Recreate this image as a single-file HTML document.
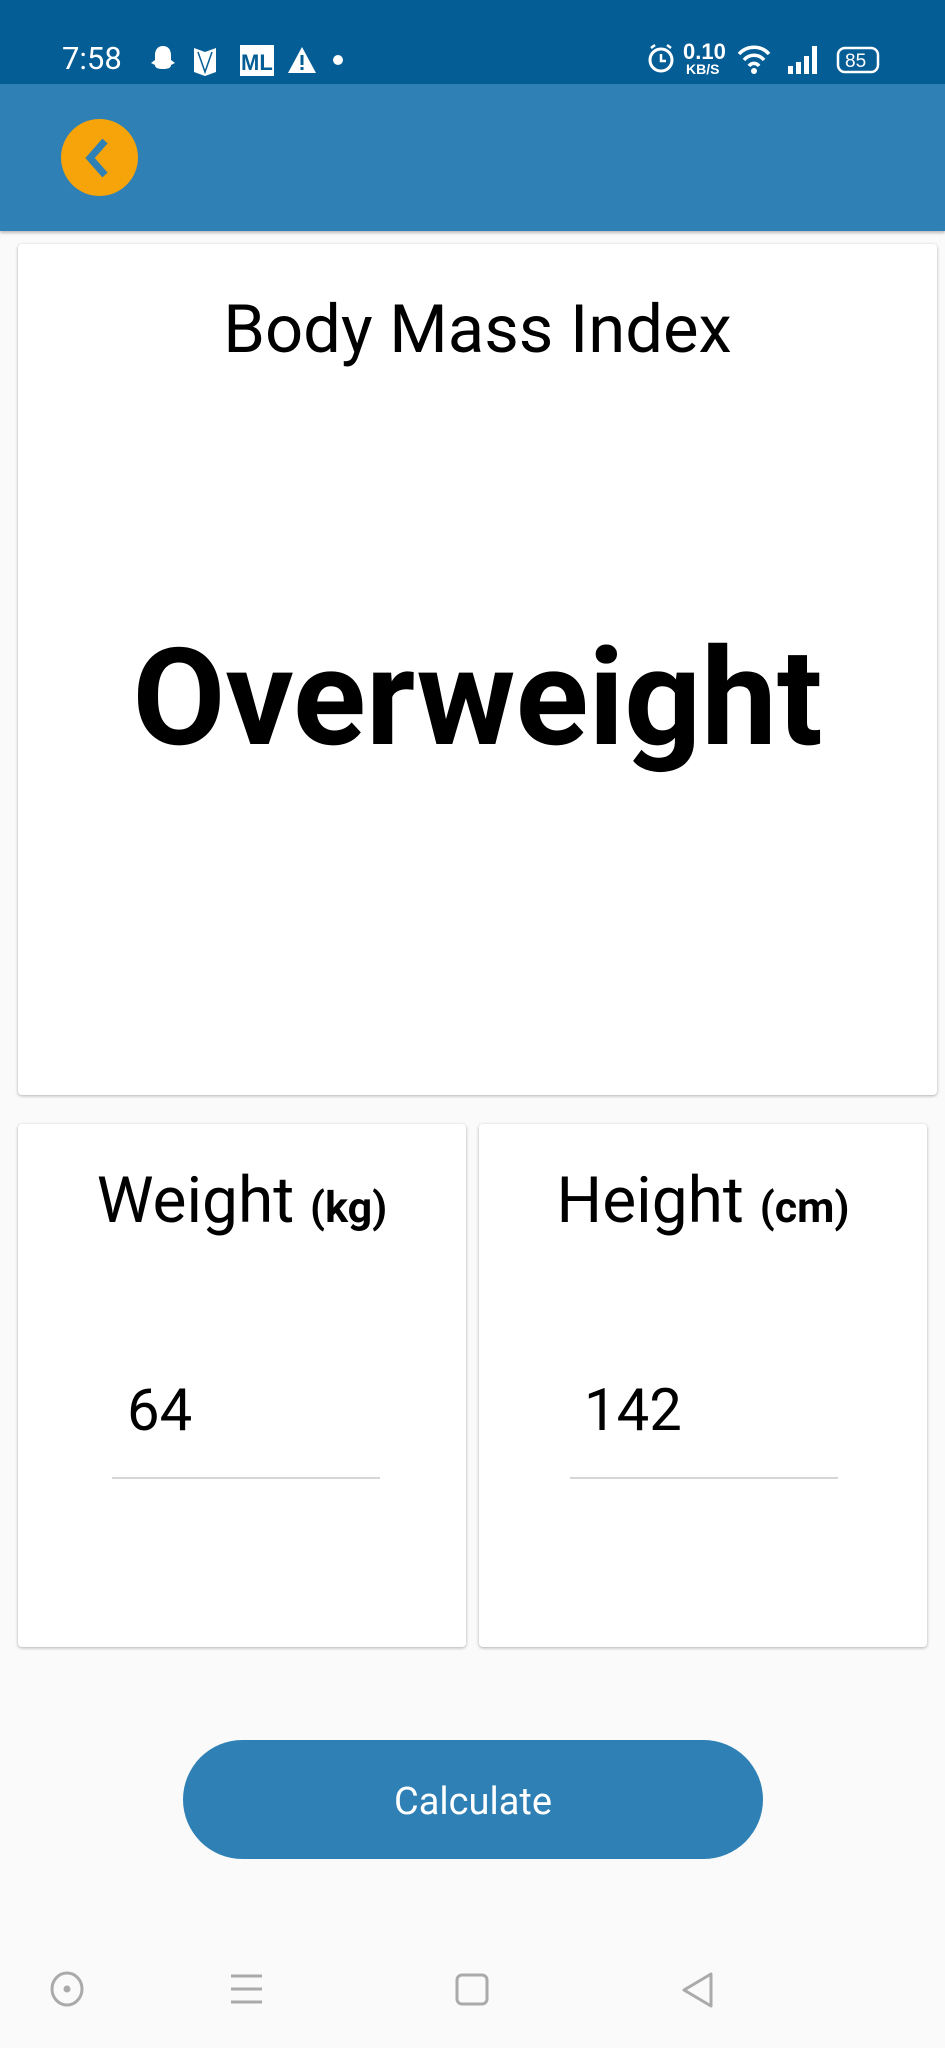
<!DOCTYPE html>
<html><head><meta charset="utf-8"><style>
*{margin:0;padding:0;box-sizing:border-box}
body{width:945px;height:2048px;background:#fafafa;font-family:"Roboto","Liberation Sans",sans-serif;position:relative;overflow:hidden;color:#000}
.abs{position:absolute}
.sb{left:0;top:0;width:945px;height:84px;background:#045d95;color:#fff}
.hd{left:0;top:84px;width:945px;height:147px;background:#2e80b5;box-shadow:0 2px 3px rgba(0,0,0,.25)}
.card{background:#fff;border-radius:4px;box-shadow:0 1px 3px rgba(0,0,0,.3)}
.c{text-align:center;width:100%}
</style></head><body>
<div class="abs sb">
 <div class="abs" style="left:62px;top:39px;font-size:31px;line-height:40px;">7:58</div>
 <svg class="abs" style="left:148px;top:44px" width="210" height="34" viewBox="0 0 210 34">
  <path d="M15 2c6 0 8 5 8 9v5l4 3-4 2c0 3-3 4-8 4s-8-1-8-4l-4-2 4-3v-5c0-4 2-9 8-9z" fill="#fff"/>
  <path d="M46 4l11 4 11-4v24l-11 4-11-4z" fill="#fff"/><path d="M50 8l7 20 7-20" stroke="#045d95" stroke-width="1.5" fill="none"/>
  <rect x="92" y="1" width="34" height="31" fill="#fff"/><text x="93" y="26" font-size="22" font-weight="bold" fill="#045d95" font-family="Liberation Sans">ML</text>
  <path d="M154 3l14 26h-28z" fill="#fff"/><rect x="152.5" y="11" width="3" height="10" fill="#045d95"/><rect x="152.5" y="23" width="3" height="3" fill="#045d95"/>
  <circle cx="190" cy="16" r="5" fill="#fff"/>
 </svg>
 <svg class="abs" style="left:645px;top:40px" width="240" height="38" viewBox="0 0 240 38">
  <circle cx="16" cy="20" r="11" stroke="#fff" stroke-width="3" fill="none"/><path d="M16 14v7h5" stroke="#fff" stroke-width="2.5" fill="none"/>
  <path d="M6 8l4-3M26 8l-4-3" stroke="#fff" stroke-width="2.5"/>
  <text x="38" y="19" font-size="22" font-weight="bold" fill="#fff" font-family="Liberation Sans">0.10</text>
  <text x="41" y="34" font-size="14" font-weight="bold" fill="#fff" font-family="Liberation Sans">KB/S</text>
  <path d="M94 14a20 20 0 0 1 30 0M99 20a13 13 0 0 1 20 0M104 26a6 6 0 0 1 10 0" stroke="#fff" stroke-width="3.5" fill="none"/><circle cx="109" cy="31" r="3" fill="#fff"/>
  <rect x="143" y="26" width="5" height="8" fill="#fff"/><rect x="151" y="22" width="5" height="12" fill="#fff"/><rect x="159" y="16" width="5" height="18" fill="#fff"/><rect x="167" y="6" width="5" height="28" fill="#fff"/>
  <rect x="193" y="8" width="40" height="24" rx="7" stroke="#fff" stroke-width="2.5" fill="none"/>
  <text x="200" y="27" font-size="19" fill="#fff" font-family="Liberation Sans">85</text>
 </svg>
</div>
<div class="abs hd">
 <div class="abs" style="left:61px;top:35px;width:77px;height:77px;border-radius:50%;background:#f7a30a"></div>
 <svg class="abs" style="left:61px;top:35px" width="77" height="77" viewBox="0 0 77 77"><path d="M44 22L29 39l15 17" stroke="#2e80b5" stroke-width="7" fill="none"/></svg>
</div>
<div class="abs card" style="left:18px;top:244px;width:919px;height:851px">
 <div class="abs c" style="top:46px;font-size:67px;line-height:80px">Body Mass Index</div>
 <div class="abs c" style="top:379px;font-size:135px;font-weight:bold;line-height:150px">Overweight</div>
</div>
<div class="abs card" style="left:18px;top:1124px;width:448px;height:523px">
 <div class="abs c" style="top:37px;font-size:64px;line-height:80px">Weight <b style="font-size:43px">(kg)</b></div>
 <div class="abs" style="left:109px;top:252px;font-size:58px;line-height:70px">64</div>
 <div class="abs" style="left:94px;top:353px;width:268px;height:2px;background:#d6d6d6"></div>
</div>
<div class="abs card" style="left:479px;top:1124px;width:448px;height:523px">
 <div class="abs c" style="top:37px;font-size:64px;line-height:80px">Height <b style="font-size:43px">(cm)</b></div>
 <div class="abs" style="left:105px;top:252px;font-size:58px;line-height:70px">142</div>
 <div class="abs" style="left:91px;top:353px;width:268px;height:2px;background:#d6d6d6"></div>
</div>
<div class="abs" style="left:183px;top:1740px;width:580px;height:119px;border-radius:60px;background:#2e80b5;color:#fff;font-size:38px;line-height:124px;text-align:center">Calculate</div>
<svg class="abs" style="left:0;top:1960px" width="945" height="60" viewBox="0 0 945 60">
 <g stroke="#aaa" stroke-width="3" fill="none">
  <ellipse cx="67" cy="29" rx="15" ry="16"/>
  <path d="M231 16h31M231 29h31M231 42h31"/>
  <rect x="457" y="15" width="30" height="29" rx="5"/>
  <path d="M711 14v32L684 30z" stroke-linejoin="round"/>
 </g>
 <circle cx="67" cy="29" r="3.5" fill="#aaa"/>
</svg>
</body></html>
